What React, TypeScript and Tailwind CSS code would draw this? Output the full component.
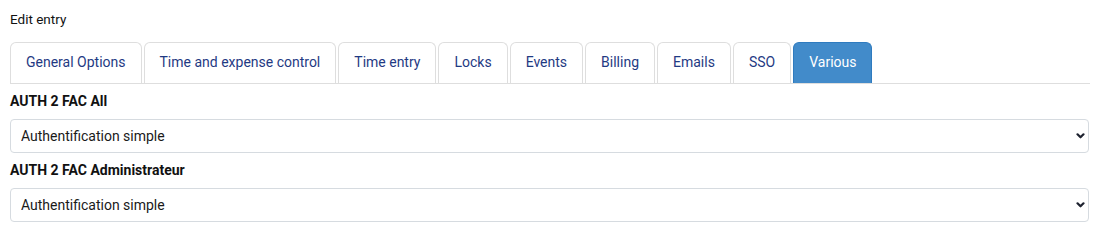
import React from "react";

const tabs = [
  "General Options",
  "Time and expense control",
  "Time entry",
  "Locks",
  "Events",
  "Billing",
  "Emails",
  "SSO",
  "Various",
];

const Chevron = () => (
  <svg
    className="pointer-events-none absolute right-[4px] top-1/2 -translate-y-1/2"
    width="9"
    height="7"
    viewBox="0 0 9 7"
  >
    <path d="M1.5 1.8 4.5 4.8 7.5 1.8" fill="none" stroke="#1f2330" strokeWidth="2.2" strokeLinecap="round" strokeLinejoin="round" />
  </svg>
);

const Field = ({ label, value }: { label: string; value: string }) => (
  <div>
    <label className="block text-[14px] font-bold leading-[18px] text-[#111]">{label}</label>
    <div className="relative mt-[9px]">
      <select
        defaultValue={value}
        className="block h-[34px] w-full appearance-none rounded-[4px] border border-[#d6dbe0] bg-white pl-[10px] pr-8 text-[14px] text-[#1a1a1a] outline-none"
      >
        <option>Authentification simple</option>
        <option>Authentification à deux facteurs</option>
      </select>
      <Chevron />
    </div>
  </div>
);

export default function App() {
  return (
    <div className="w-[1100px] h-[242px] bg-white px-[10px] pt-[10px] font-['Roboto',sans-serif]">
      <div className="text-[13.5px] leading-[18px] text-[#111]">Edit entry</div>

      {/* Tabs */}
      <div className="mt-[14px] flex border-b border-[#dedede]">
        {tabs.map((t) => {
          const active = t === "Various";
          return (
            <div
              key={t}
              className={
                active
                  ? "mr-[2px] flex h-[41px] items-center rounded-t-[6px] border border-b-0 border-[#2f7bbf] bg-[#428bca] px-[15px] pb-[1px] text-[14px] text-white"
                  : "mr-[2px] flex h-[41px] items-center rounded-t-[6px] border border-b-0 border-[#dedede] bg-white px-[15px] pb-[1px] text-[14px] text-[#1f3a83]"
              }
            >
              {t}
            </div>
          );
        })}
      </div>

      <div className="mt-[8px] flex flex-col gap-[8px] pr-[1px]">
        <Field label="AUTH 2 FAC All" value="Authentification simple" />
        <Field label="AUTH 2 FAC Administrateur" value="Authentification simple" />
      </div>
    </div>
  );
}
